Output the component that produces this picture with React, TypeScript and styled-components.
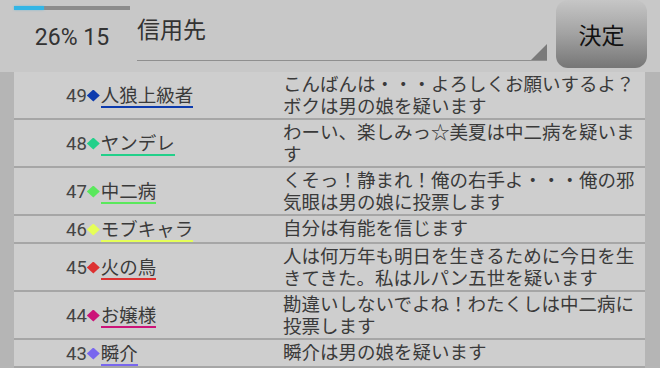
import React from 'react'
import styled, { createGlobalStyle } from 'styled-components'

const GlobalStyle = createGlobalStyle`
  html, body {
    margin: 0;
    padding: 0;
    background: #b5b5b5;
  }
  body {
    font-family: Roboto, "Noto Sans CJK JP", sans-serif;
    color: #3a3a3a;
  }
`

type Vote = {
  no: number
  name: string
  color: string
  text: string
}

const votes: Vote[] = [
  { no: 49, name: '人狼上級者', color: '#0d3bae', text: 'こんばんは・・・よろしくお願いするよ？ボクは男の娘を疑います' },
  { no: 48, name: 'ヤンデレ', color: '#22d08a', text: 'わーい、楽しみっ☆美夏は中二病を疑います' },
  { no: 47, name: '中二病', color: '#5ae85c', text: 'くそっ！静まれ！俺の右手よ・・・俺の邪気眼は男の娘に投票します' },
  { no: 46, name: 'モブキャラ', color: '#e6ff58', text: '自分は有能を信じます' },
  { no: 45, name: '火の鳥', color: '#dd3131', text: '人は何万年も明日を生きるために今日を生きてきた。私はルパン五世を疑います' },
  { no: 44, name: 'お嬢様', color: '#cc1479', text: '勘違いしないでよね！わたくしは中二病に投票します' },
  { no: 43, name: '瞬介', color: '#7866ef', text: '瞬介は男の娘を疑います' },
]

const progress = 26

const App: React.FC = () => {
  return (
    <Page>
      <GlobalStyle />
      <Header>
        <Status>
          <Progress>
            <ProgressFill style={{ width: `${progress}%` }} />
          </Progress>
          <StatusText>{progress}% 15</StatusText>
        </Status>
        <Field>
          <FieldText>信用先</FieldText>
        </Field>
        <Decide>決定</Decide>
      </Header>
      <List>
        {votes.map((v) => (
          <Row key={v.no}>
            <Who>
              <No>{v.no}</No>
              <Mark color={v.color} />
              <Name color={v.color}>{v.name}</Name>
            </Who>
            <Says>{v.text}</Says>
          </Row>
        ))}
      </List>
    </Page>
  )
}

export default App

const Page = styled.div`
  width: 660px;
  height: 368px;
  overflow: hidden;
  display: flex;
  flex-direction: column;
  background: #b5b5b5;
`

const Header = styled.header`
  height: 72px;
  flex-shrink: 0;
  display: flex;
  align-items: flex-start;
  padding: 0 13px 0 14px;
  background: #c8c8c8;
`

const Status = styled.div`
  width: 116px;
  padding-top: 6px;
`

const Progress = styled.div`
  height: 4px;
  background: #8c8c8c;
`

const ProgressFill = styled.div`
  height: 100%;
  background: #33b5e5;
  box-shadow: 0 0 2px rgba(51, 181, 229, 0.6);
`

const StatusText = styled.div`
  margin-top: 14px;
  text-align: center;
  font-size: 23px;
  line-height: 28px;
  color: #333;
`

const Field = styled.div`
  position: relative;
  margin-left: 7px;
  width: 410px;
  height: 60px;
  border-bottom: 1.5px solid #8f8f8f;

  &::after {
    content: '';
    position: absolute;
    right: 0;
    bottom: 0;
    width: 0;
    height: 0;
    border-style: solid;
    border-width: 0 0 16px 16px;
    border-color: transparent transparent #7a7a7a transparent;
  }
`

const FieldText = styled.div`
  padding-top: 17px;
  font-size: 23px;
  line-height: 28px;
  color: #333;
`

const Decide = styled.button`
  margin-left: 9px;
  width: 91px;
  height: 68px;
  border: none;
  border-radius: 12px;
  background: linear-gradient(to bottom, #c6c6c6, #a2a2a2 50%, #767676);
  font-family: Roboto, "Noto Sans CJK JP", sans-serif;
  font-size: 23px;
  color: #111;
  padding: 0;
`

const List = styled.div`
  flex: 1;
  margin: 0 15px 0 14px;
  background: #cecece;
`

const Row = styled.div`
  display: grid;
  grid-template-columns: 269px 362px;
  padding-top: 2px;
  border-bottom: 2px solid #a6a6a6;
`

const Who = styled.div`
  display: flex;
  align-items: center;
  padding-left: 52px;
  height: 100%;
  line-height: 20px;
`

const No = styled.span`
  font-size: 18.5px;
  color: #444;
`

const Mark = styled.span<{ color: string }>`
  flex-shrink: 0;
  width: 13px;
  height: 12px;
  margin: 0 1px 1px 0;
  background: ${(p) => p.color};
  clip-path: polygon(50% 0, 100% 50%, 50% 100%, 0 50%);
`

const Name = styled.span<{ color: string }>`
  display: inline-block;
  font-size: 18.5px;
  line-height: 20px;
  color: #3a3a3a;
  border-bottom: 2px solid ${(p) => p.color};
  margin-top: 2px;
`

const Says = styled.div`
  font-size: 18.5px;
  line-height: 22px;
  color: #3a3a3a;
`
